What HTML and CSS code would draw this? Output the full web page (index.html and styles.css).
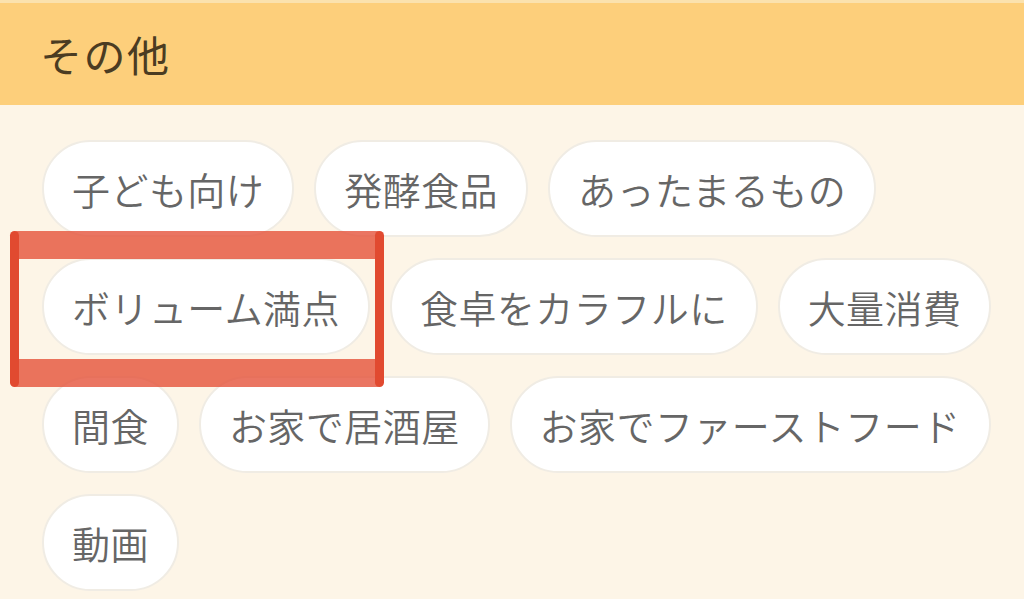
FILE: index.html
```html
<!DOCTYPE html>
<html lang="ja">
<head>
<meta charset="utf-8">
<link rel="stylesheet" href="styles.css">
</head>
<body>
<div class="panel">
  <div class="header">その他</div>
  <div class="tags">
    <span class="tag">子ども向け</span>
    <span class="tag">発酵食品</span>
    <span class="tag">あったまるもの</span>
    <span class="tag">ボリューム満点</span>
    <span class="tag">食卓をカラフルに</span>
    <span class="tag">大量消費</span>
    <span class="tag">間食</span>
    <span class="tag">お家で居酒屋</span>
    <span class="tag">お家でファーストフード</span>
    <span class="tag">動画</span>
  </div>
  <div class="highlight"></div>
</div>
</body>
</html>
```
FILE: styles.css
```css
html, body {
  margin: 0;
  padding: 0;
  background: #fdf5e7;
}
body {
  font-family: "Noto Sans CJK JP", "Noto Sans", sans-serif;
  width: 1024px;
  height: 599px;
  overflow: hidden;
}
.panel {
  position: relative;
  height: 599px;
}
.header {
  box-sizing: border-box;
  height: 105px;
  background: #fdcf7b;
  border-top: 3px solid #fbe2ae;
  padding-left: 40px;
  padding-bottom: 2px;
  display: flex;
  align-items: center;
  font-size: 42px;
  letter-spacing: 1.5px;
  color: #4b3c22;
}
.tags {
  display: flex;
  flex-wrap: wrap;
  gap: 21px 20px;
  padding: 35px 0 0 42px;
}
.tag {
  box-sizing: border-box;
  height: 97px;
  display: inline-flex;
  align-items: center;
  padding: 0 28px;
  background: #fff;
  border: 2px solid #f0ece4;
  border-radius: 49px;
  font-size: 38px;
  font-weight: 350;
  color: #666;
  letter-spacing: 0.45px;
  white-space: nowrap;
}
.highlight {
  position: absolute;
  left: 10px;
  top: 231px;
  width: 374px;
  height: 156px;
  box-sizing: border-box;
  border-top: 28px solid rgba(228, 74, 48, 0.76);
  border-bottom: 28px solid rgba(228, 74, 48, 0.76);
  border-radius: 7px;
}
.highlight::before,
.highlight::after {
  content: "";
  position: absolute;
  top: -28px;
  bottom: -28px;
  width: 9px;
  background: #e14a30;
  border-radius: 5px;
}
.highlight::before {
  left: 0;
}
.highlight::after {
  right: 0;
}
```
